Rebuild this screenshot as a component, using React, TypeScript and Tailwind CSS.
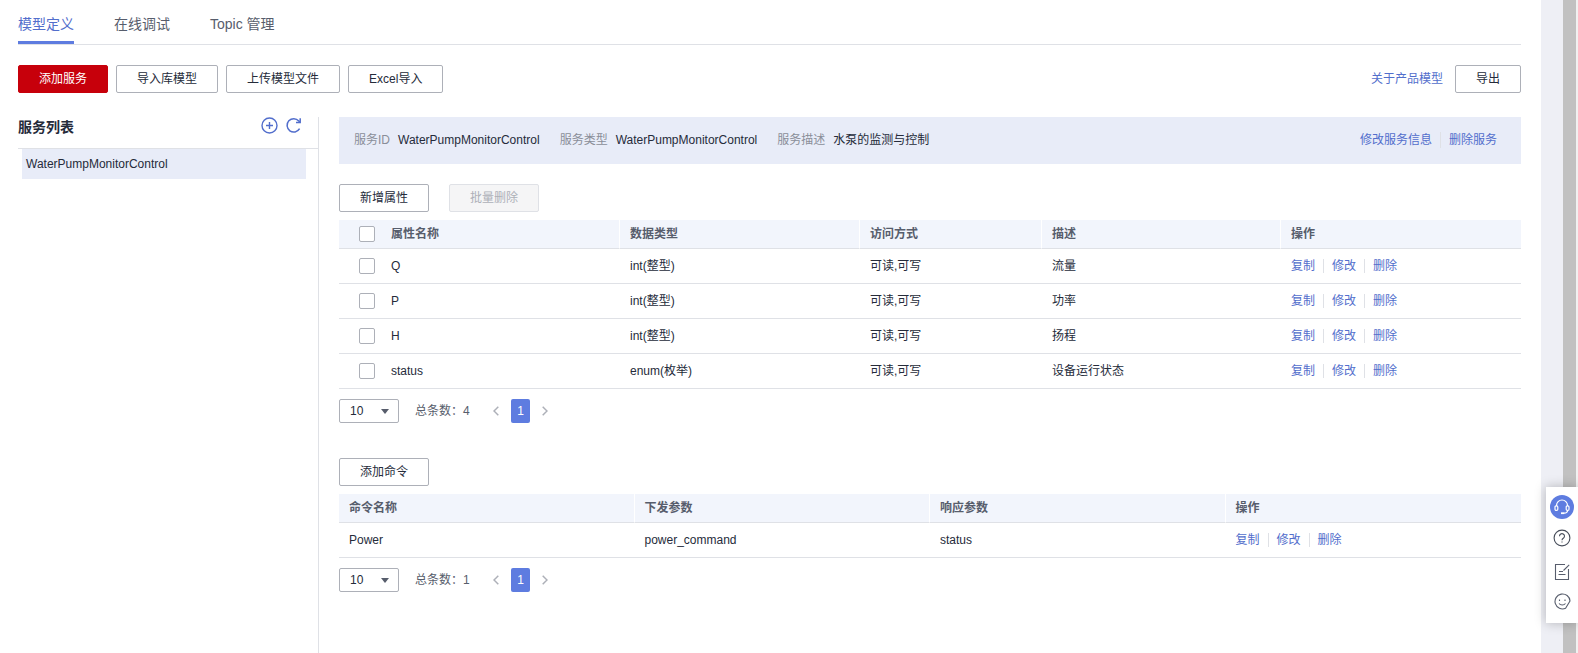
import { useState } from 'react'
import type { ReactNode } from 'react'
import clsx from 'clsx'

type Property = { name: string; type: string; access: string; description: string }
type Command = { name: string; request: string; response: string }

const tabs = ['模型定义', '在线调试', 'Topic 管理']

const properties: Property[] = [
  { name: 'Q', type: 'int(整型)', access: '可读,可写', description: '流量' },
  { name: 'P', type: 'int(整型)', access: '可读,可写', description: '功率' },
  { name: 'H', type: 'int(整型)', access: '可读,可写', description: '扬程' },
  { name: 'status', type: 'enum(枚举)', access: '可读,可写', description: '设备运行状态' }
]

const commands: Command[] = [{ name: 'Power', request: 'power_command', response: 'status' }]

const serviceInfo = [
  { label: '服务ID', value: 'WaterPumpMonitorControl' },
  { label: '服务类型', value: 'WaterPumpMonitorControl' },
  { label: '服务描述', value: '水泵的监测与控制' }
]

function Button({ children, variant = 'default', disabled }: { children: ReactNode; variant?: 'default' | 'primary'; disabled?: boolean }) {
  return (
    <button
      type="button"
      disabled={disabled}
      className={clsx(
        'h-7 rounded-xs border px-5 text-xs whitespace-nowrap',
        disabled && 'border-[#dfe1e6] bg-[#f5f5f6] text-[#adb0b8]',
        !disabled && variant === 'primary' && 'border-[#c7000b] bg-[#c7000b] text-white',
        !disabled && variant === 'default' && 'border-[#adb0b8] bg-white text-[#252b3a]'
      )}
    >
      {children}
    </button>
  )
}

function Actions({ items, className = 'h-3.5' }: { items: string[]; className?: string }) {
  return (
    <div className="flex items-center whitespace-nowrap">
      {items.map((item, i) => (
        <div key={item} className="flex items-center">
          {i > 0 && <span className={clsx('mx-2 w-px bg-[#dfe1e6]', className)} />}
          <a href="#" className="text-[#526ecc]">{item}</a>
        </div>
      ))}
    </div>
  )
}

function Checkbox({ label }: { label: string }) {
  return (
    <input
      type="checkbox"
      aria-label={label}
      className="block size-4 appearance-none rounded-xs border border-[#adb0b8] bg-white checked:bg-[#5e7ce0]"
    />
  )
}

function HeadCell({ children }: { children: ReactNode }) {
  return (
    <th className="border-r border-b border-r-white border-b-[#dfe1e6] px-2.5 text-left font-bold last:border-r-0">
      {children}
    </th>
  )
}

function Cell({ children }: { children: ReactNode }) {
  return <td className="border-b border-[#dfe1e6] px-2.5">{children}</td>
}

function Pagination({ total }: { total: number }) {
  return (
    <div className="mt-2.5 flex h-6 items-center text-[#575d6c]">
      <div className="relative">
        <select
          aria-label="每页条数"
          className="block h-6 w-15 appearance-none rounded-xs border border-[#adb0b8] bg-white pl-2.5 text-xs text-[#252b3a]"
        >
          <option>10</option>
          <option>20</option>
          <option>50</option>
        </select>
        <svg className="pointer-events-none absolute top-2.5 right-2.5" width="8" height="5" viewBox="0 0 8 5">
          <path d="M0 0h8L4 5z" fill="#575d6c" />
        </svg>
      </div>
      <span className="ml-4 w-[78px]">总条数：{total}</span>
      <button type="button" aria-label="上一页">
        <svg width="6" height="10" viewBox="0 0 6 10" fill="none" stroke="#adb0b8" strokeWidth="1.5">
          <path d="M5.3.7 1 5l4.300 4.300" />
        </svg>
      </button>
      <button type="button" className="mx-3 h-6 w-[19px] rounded-xs bg-[#5e7ce0] text-white">1</button>
      <button type="button" aria-label="下一页">
        <svg width="6" height="10" viewBox="0 0 6 10" fill="none" stroke="#adb0b8" strokeWidth="1.5">
          <path d="M.7.7 5 5 .7 9.300" />
        </svg>
      </button>
    </div>
  )
}

function ServiceList() {
  return (
    <aside className="w-[301px] shrink-0 border-r border-[#dfe1e6]">
      <div className="flex h-8 justify-between border-b border-[#dfe1e6] pr-4">
        <h2 className="text-sm font-bold">服务列表</h2>
        <div className="flex items-start gap-2 text-[#526ecc]">
          <button type="button" aria-label="添加服务">
            <svg width="17" height="17" viewBox="0 0 17 17" fill="none" stroke="currentColor" strokeWidth="1.4">
              <circle cx="8.500" cy="8.500" r="7.500" />
              <path d="M8.500 5v7M5 8.500h7" />
            </svg>
          </button>
          <button type="button" aria-label="刷新">
            <svg width="16" height="17" viewBox="0 0 16 17" fill="none" stroke="currentColor" strokeWidth="1.5">
              <path d="M13.600 11.700A6.700 6.700 0 1 1 12.800 3.900L13.800 5" />
              <path d="M14.200 1.200v4.200H10" />
            </svg>
          </button>
        </div>
      </div>
      <ul>
        <li className="mr-3 ml-1 bg-[#e8ecf8] px-1 leading-[30px]">WaterPumpMonitorControl</li>
      </ul>
    </aside>
  )
}

function PropertyTable() {
  return (
    <table className="mt-2 w-full table-fixed border-separate border-spacing-0">
      <colgroup>
        <col className="w-[42px]" />
        <col />
        <col className="w-60" />
        <col className="w-[182px]" />
        <col className="w-[239px]" />
        <col className="w-60" />
      </colgroup>
      <thead>
        <tr className="h-[29px] bg-[#f2f5fc] text-[#575d6c]">
          <th className="border-b border-[#dfe1e6] pl-5"><Checkbox label="全选" /></th>
          <HeadCell>属性名称</HeadCell>
          <HeadCell>数据类型</HeadCell>
          <HeadCell>访问方式</HeadCell>
          <HeadCell>描述</HeadCell>
          <HeadCell>操作</HeadCell>
        </tr>
      </thead>
      <tbody>
        {properties.map((p) => (
          <tr key={p.name} className="h-[35px]">
            <td className="border-b border-[#dfe1e6] pl-5"><Checkbox label={p.name} /></td>
            <Cell>{p.name}</Cell>
            <Cell>{p.type}</Cell>
            <Cell>{p.access}</Cell>
            <Cell>{p.description}</Cell>
            <Cell><Actions items={['复制', '修改', '删除']} /></Cell>
          </tr>
        ))}
      </tbody>
    </table>
  )
}

function CommandTable() {
  return (
    <table className="mt-2 w-full table-fixed border-separate border-spacing-0">
      <thead>
        <tr className="h-[29px] bg-[#f2f5fc] text-[#575d6c]">
          <HeadCell>命令名称</HeadCell>
          <HeadCell>下发参数</HeadCell>
          <HeadCell>响应参数</HeadCell>
          <HeadCell>操作</HeadCell>
        </tr>
      </thead>
      <tbody>
        {commands.map((c) => (
          <tr key={c.name} className="h-[35px]">
            <Cell>{c.name}</Cell>
            <Cell>{c.request}</Cell>
            <Cell>{c.response}</Cell>
            <Cell><Actions items={['复制', '修改', '删除']} /></Cell>
          </tr>
        ))}
      </tbody>
    </table>
  )
}

function HelpDock() {
  return (
    <div className="fixed right-0 bottom-[30px] flex h-[136px] w-8 flex-col items-center bg-white pt-2 shadow-[0_0_12px_rgba(0,0,0,0.25)]">
      <button type="button" aria-label="客服" className="flex size-6 items-center justify-center rounded-full bg-[#5e7ce0]">
        <svg width="16" height="16" viewBox="0 0 16 16" fill="none" stroke="#fff" strokeWidth="1.2">
          <path d="M2.500 7V6.500a5.500 5.500 0 0 1 11 0V7" />
          <rect x="1" y="6.800" width="2.800" height="4.600" rx="1.200" />
          <rect x="12.200" y="6.800" width="2.800" height="4.600" rx="1.200" />
          <path d="M13.600 11.400c0 1.700-1.600 2.600-3.600 2.800" />
          <path d="M7 14.200h3.200" strokeWidth="1.800" />
        </svg>
      </button>
      <button type="button" aria-label="帮助" className="mt-2.5">
        <svg width="18" height="18" viewBox="0 0 18 18" fill="none" stroke="#464c59" strokeWidth="1.1">
          <circle cx="9" cy="9" r="7.900" />
          <path d="M6.500 7.200a2.500 2.500 0 1 1 3.800 2.100c-.9.6-1.300.9-1.300 1.900" />
          <path d="M9 12.400v1.200" />
        </svg>
      </button>
      <button type="button" aria-label="反馈" className="mt-4">
        <svg width="16" height="18" viewBox="0 0 16 18" fill="none" stroke="#575d6c" strokeWidth="1.100">
          <path d="M11 1.500H1.500v15h13V6" />
          <path d="M15.200 1.800 9.500 7.500M5 8.500h4M4.500 11.500h7" />
        </svg>
      </button>
      <button type="button" aria-label="评价" className="mt-3">
        <svg width="17" height="17" viewBox="0 0 17 17" fill="none" stroke="#575d6c" strokeWidth="1.100">
          <path d="M16 8A7.500 7.500 0 1 0 11.600 15.300L16 8z" strokeLinejoin="round" />
          <path d="M5.500 6.500v1.500M11 6.500v1.500M5 10.500c1.600 1.900 4.900 1.900 6.500 0" />
        </svg>
      </button>
    </div>
  )
}

export default function App() {
  const [activeTab, setActiveTab] = useState(tabs[0])

  return (
    <div className="flex min-h-screen bg-white font-['Liberation_Sans','Noto_Sans_CJK_SC',sans-serif] text-xs text-[#252b3a]">
      <div className="flex min-w-0 flex-1 flex-col pr-5 pl-[18px]">
        <nav className="flex h-[45px] gap-10 border-b border-[#dfe1e6] text-sm">
          {tabs.map((tab) => (
            <button
              key={tab}
              type="button"
              onClick={() => setActiveTab(tab)}
              className={clsx(
                'border-b-3 pt-1.5',
                tab === activeTab ? 'border-[#5e7ce0] text-[#526ecc]' : 'border-transparent text-[#575d6c]'
              )}
            >
              {tab}
            </button>
          ))}
        </nav>

        <div className="mt-5 flex items-center gap-2">
          <Button variant="primary">添加服务</Button>
          <Button>导入库模型</Button>
          <Button>上传模型文件</Button>
          <Button>Excel导入</Button>
          <div className="ml-auto flex items-center gap-3">
            <a href="#" className="text-[#526ecc]">关于产品模型</a>
            <Button>导出</Button>
          </div>
        </div>

        <div className="mt-6 flex flex-1">
          <ServiceList />

          <main className="ml-5 min-w-0 flex-1">
            <div className="flex h-[47px] items-center bg-[#e8ecf8] pr-6 pb-0.5 pl-[15px]">
              <dl className="flex gap-5">
                {serviceInfo.map((info) => (
                  <div key={info.label} className="flex gap-2">
                    <dt className="text-[#8a8e99]">{info.label}</dt>
                    <dd>{info.value}</dd>
                  </div>
                ))}
              </dl>
              <div className="ml-auto">
                <Actions items={['修改服务信息', '删除服务']} className="h-4" />
              </div>
            </div>

            <div className="mt-5 flex gap-5">
              <Button>新增属性</Button>
              <Button disabled>批量删除</Button>
            </div>
            <PropertyTable />
            <Pagination total={4} />

            <div className="mt-[35px] flex">
              <Button>添加命令</Button>
            </div>
            <CommandTable />
            <Pagination total={1} />
          </main>
        </div>
      </div>

      {/* Page gutter and scrollbar track */}
      <div className="w-[22px] shrink-0 bg-[#eeeff5]" />
      <div className="w-[15px] shrink-0 border-r-2 border-[#f1f1f1] bg-[#c1c1c1]" />
      <HelpDock />
    </div>
  )
}
